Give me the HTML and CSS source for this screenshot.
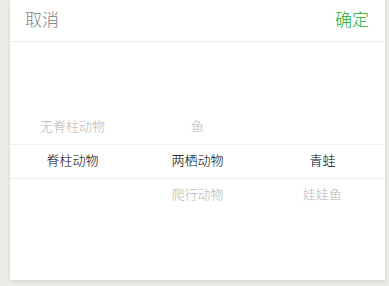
FILE: index.html
```html
<!DOCTYPE html>
<html lang="zh-CN">
<head>
  <meta charset="UTF-8">
  <title>Picker</title>
  <link rel="stylesheet" href="styles.css">
</head>
<body>
  <div class="picker">
    <div class="picker-hd">
      <span class="picker-action cancel">取消</span>
      <span class="picker-action confirm">确定</span>
    </div>
    <div class="picker-bd">
      <div class="picker-col col-up2">
        <div class="picker-item">无脊柱动物</div>
        <div class="picker-item selected">脊柱动物</div>
      </div>
      <div class="picker-col col-up2">
        <div class="picker-item">鱼</div>
        <div class="picker-item selected">两栖动物</div>
        <div class="picker-item">爬行动物</div>
      </div>
      <div class="picker-col col-up3">
        <div class="picker-item selected">青蛙</div>
        <div class="picker-item">娃娃鱼</div>
      </div>
      <div class="picker-indicator"></div>
    </div>
  </div>
</body>
</html>
```

FILE: styles.css
```css
html, body {
  margin: 0;
  padding: 0;
  height: 100%;
  background: #ecebe7;
  font-family: "Liberation Sans", "Noto Sans CJK SC", sans-serif;
}
.picker {
  margin-left: 10px;
  width: 375px;
  background: #fff;
  box-shadow: 0 1px 4px rgba(0, 0, 0, 0.12);
}
.picker-hd {
  display: flex;
  justify-content: space-between;
  align-items: center;
  height: 41px;
  padding: 0 16px 0 15px;
  border-bottom: 1px solid #ececec;
}
.picker-action {
  font-size: 17px;
  line-height: 1;
  font-weight: 300;
}
.cancel { color: #808080; }
.confirm { color: #1aad19; }
.picker-bd {
  position: relative;
  display: flex;
  height: 238px;
  overflow: hidden;
}
.picker-col {
  flex: 1;
  display: flex;
  flex-direction: column;
}
.col-up2 { padding-top: 68px; }
.col-up3 { padding-top: 102px; }
.picker-item {
  height: 34px;
  line-height: 34px;
  text-align: center;
  font-size: 13px;
  font-weight: 300;
  color: #b5b5b5;
}
.picker-item.selected {
  color: #000;
}
.picker-indicator {
  position: absolute;
  left: 0;
  right: 0;
  top: 102px;
  height: 33px;
  border-top: 1px solid #f0f0f0;
  border-bottom: 1px solid #ececec;
  pointer-events: none;
}
```
